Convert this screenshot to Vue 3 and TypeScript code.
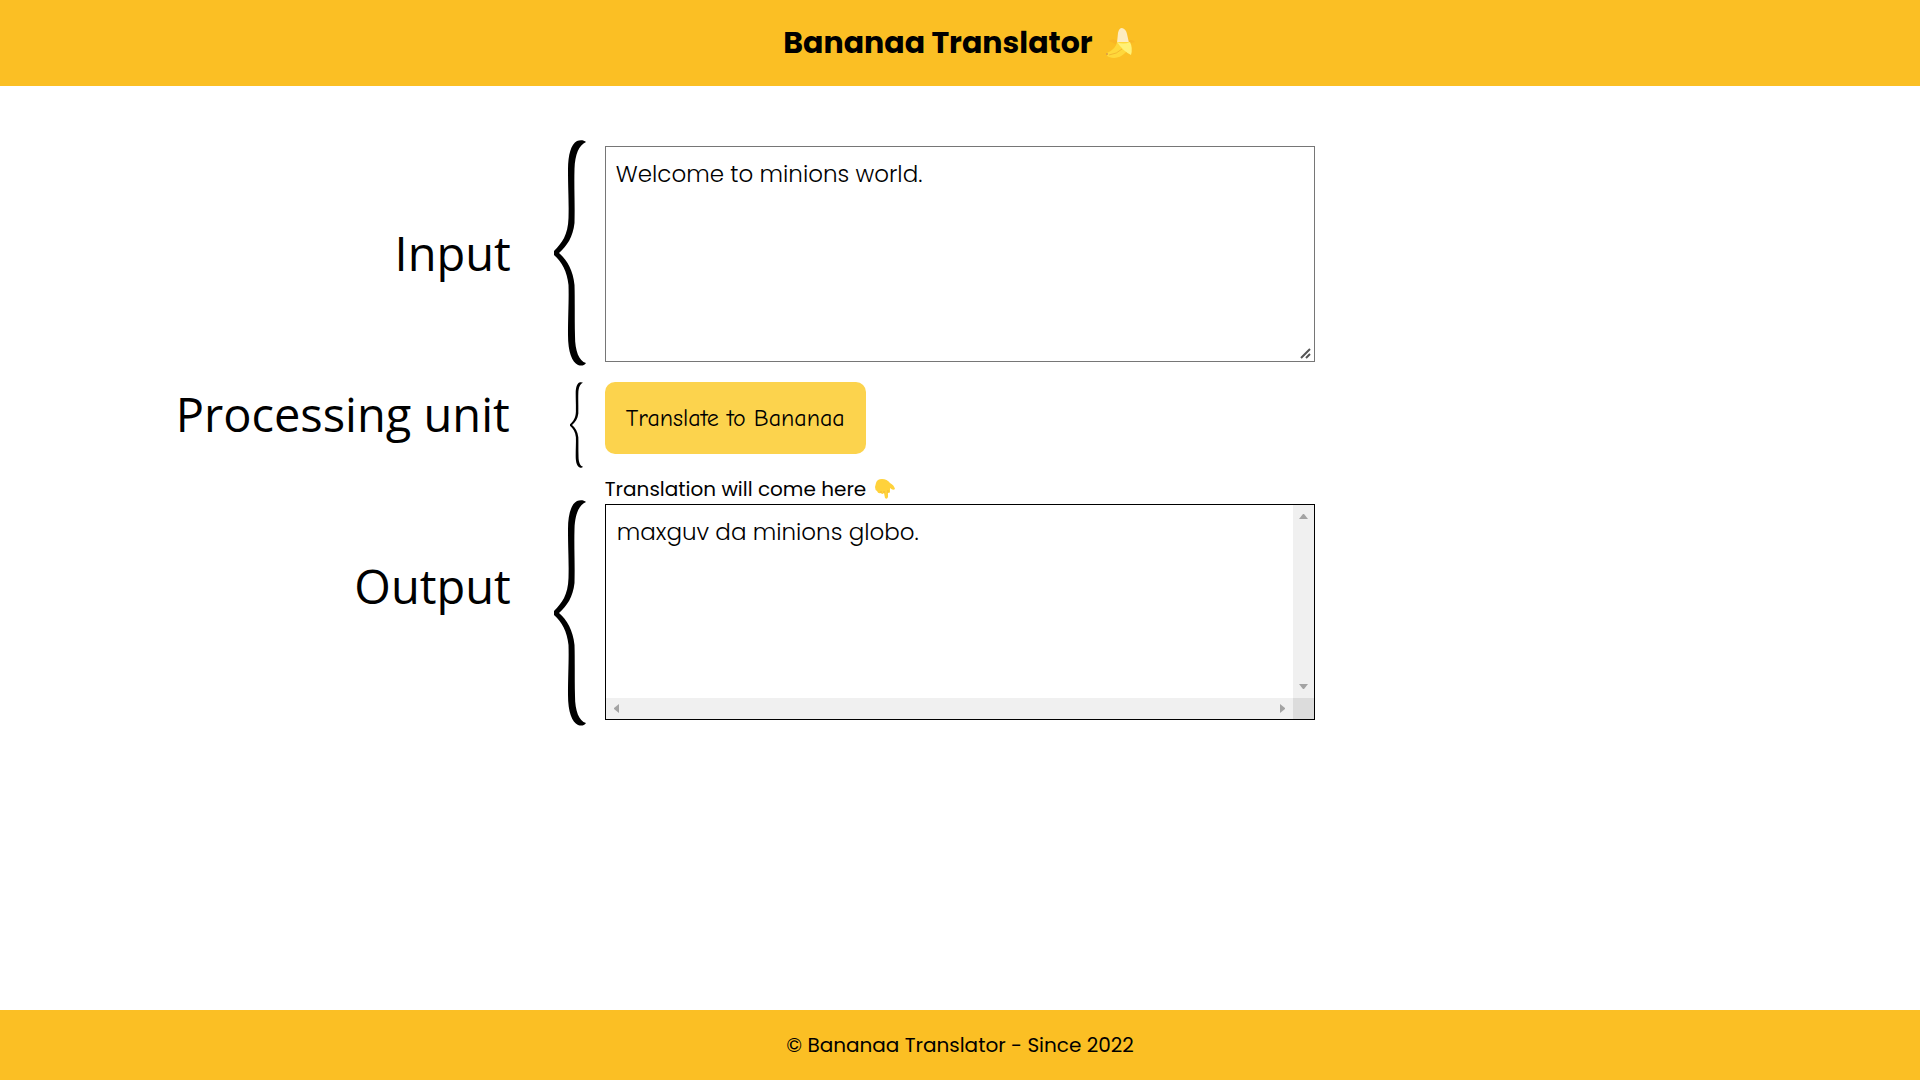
<script setup lang="ts">
import { ref } from 'vue'

const source = ref('Welcome to minions world.')
const output = ref('maxguv da minions globo.')

const dictionary: Record<string, string> = {
  welcome: 'maxguv',
  to: 'da',
  world: 'globo',
}

function translate(): void {
  output.value = source.value.replace(/[a-z]+/gi, (word) => dictionary[word.toLowerCase()] ?? word)
}

const bracePath =
  'M32 2 C30 0 26 0 23 1 C17 4 14 15 14 29 C14 50 15 60 14.500 78 C14 95 8 103 0 111 L0 115 C8 122 13 131 14.500 145 C15 160 14 175 14 195 C14 212 18 222 24 225 C27 226 30 226 32 223 C25 221 21 211 21 196 C20.500 175 21 160 20.500 145 C19 130 13 120 5 113 C13 106 19 97 20.500 83 C21 60 20 50 20.500 29 C21 14 25 5 32 2 Z'
</script>

<template>
  <div class="page">
    <header class="bar header">
      <h1>Bananaa Translator</h1>
      <svg class="banana" viewBox="0 0 30 32" aria-hidden="true">
        <path d="M4 14 Q9 10 13 15 L12 18 Q7 15 4 14Z M22 15 Q26 11 30 15 Q27 15 24 18Z" fill="#f9b625" />
        <path d="M12 16 L13 6 Q14 1 17 1 Q21 2 22 7 L24 16 L20 21Z" fill="#fdecc0" />
        <path d="M12 15 Q11 22 2 26 Q1 29 4 30 Q13 33 20 26 L25 21 L24 15Z" fill="#ffd83b" />
        <path d="M12 15 Q18 18 25 15 Q28 21 26 28 Q18 24 12 15Z" fill="#fff176" />
        <path d="M4 28 Q12 27 17 22" fill="none" stroke="#f4b92f" stroke-width="1" />
        <circle cx="2" cy="27" r="1" fill="#d99a48" />
      </svg>
    </header>

    <main class="diagram">
      <div class="note">
        <label class="note-text" for="source">Input</label>
        <svg class="brace" viewBox="0 0 32 226" preserveAspectRatio="none" aria-hidden="true">
          <path :d="bracePath" />
        </svg>
      </div>
      <div class="field">
        <textarea id="source" v-model="source" class="box" spellcheck="false"></textarea>
        <svg class="grip" viewBox="0 0 12 12" aria-hidden="true">
          <path d="M1 10 L10 1 M6 10 L10 6" />
        </svg>
      </div>

      <div class="note note-process">
        <span class="note-text">Processing unit</span>
        <svg class="brace brace-small" viewBox="0 0 32 226" preserveAspectRatio="none" aria-hidden="true">
          <path :d="bracePath" />
        </svg>
      </div>
      <div class="action">
        <button type="button" @click="translate">Translate to Bananaa</button>
      </div>

      <div class="note note-output">
        <span class="note-text">Output</span>
        <svg class="brace" viewBox="0 0 32 226" preserveAspectRatio="none" aria-hidden="true">
          <path :d="bracePath" />
        </svg>
      </div>
      <div class="result">
        <label class="caption" for="output">
          <span>Translation will come here</span>
          <svg class="hand" viewBox="0 0 20 20" aria-hidden="true">
            <path
              d="M1 4 Q2 0 7 0 Q12 0 15 4 Q19 6 20 10 Q18 12 15 9 L15 13 Q14 15 13 13 L13 18 Q12 21 10 19 L9 14 Q7 16 6 14 Q3 15 2 12 Q0 11 0 8Z"
              fill="#ffd23b"
            />
            <path d="M6 14 L6 12 M9 14 L9 12 M13 14 L13 11" fill="none" stroke="#f3b832" />
          </svg>
        </label>
        <div class="scroll-frame">
          <textarea id="output" v-model="output" class="box box-output" readonly spellcheck="false"></textarea>
          <div class="track track-y" aria-hidden="true">
            <svg viewBox="0 0 9 5"><path d="M0 5 L4 0 L5 0 L9 5Z" /></svg>
            <svg viewBox="0 0 9 5"><path d="M0 0 L9 0 L5 5 L4 5Z" /></svg>
          </div>
          <div class="track track-x" aria-hidden="true">
            <svg viewBox="0 0 5 9"><path d="M5 0 L5 9 L0 5 L0 4Z" /></svg>
            <svg viewBox="0 0 5 9"><path d="M0 0 L5 4 L5 5 L0 9Z" /></svg>
          </div>
          <div class="corner" aria-hidden="true"></div>
        </div>
      </div>
    </main>

    <footer class="bar footer">© Bananaa Translator - Since 2022</footer>
  </div>
</template>

<style>
body {
  margin: 0;
  background: #fff;
}
</style>

<style scoped>
.page {
  display: flex;
  flex-direction: column;
  min-height: 100vh;
  color: #000;
  font-family: Poppins, Inter, sans-serif;
}

.bar {
  display: flex;
  align-items: center;
  justify-content: center;
  background: #fbbf24;
}

.header {
  height: 86px;
  gap: 10px;
}

h1 {
  margin: 0;
  font-size: 30px;
  line-height: 40px;
  font-weight: 700;
}

.banana {
  width: 34px;
  height: 32px;
}

.diagram {
  display: grid;
  grid-template-columns: 1fr 37% 1fr;
  row-gap: 16px;
  align-content: start;
  flex: 1;
  padding: 54px 0;
}

.note {
  grid-column: 1;
  display: flex;
  justify-content: flex-end;
  align-items: center;
  gap: 43px;
  padding-right: 19px;
}

.note-text {
  font-family: 'Open Sans', sans-serif;
  font-size: 47px;
  line-height: 64px;
  white-space: nowrap;
}

.brace {
  flex: none;
  width: 32px;
  height: 226px;
}

.field,
.action,
.result {
  grid-column: 2;
}

.field {
  position: relative;
  padding-top: 6px;
}

.box {
  display: block;
  box-sizing: border-box;
  width: 100%;
  height: 216px;
  margin: 0;
  padding: 9px 10px;
  border: 1px solid #767676;
  border-radius: 0;
  outline: none;
  resize: none;
  background: #fff;
  color: #000;
  font: 300 23px/36px Poppins, Inter, sans-serif;
}

.grip {
  position: absolute;
  right: 3px;
  bottom: 6px;
  width: 12px;
  height: 12px;
  fill: none;
  stroke: #555;
  stroke-width: 2;
}

.note-process {
  align-items: flex-start;
  gap: 60px;
  padding-right: 22px;
}

.brace-small {
  width: 13px;
  height: 86px;
}

button {
  height: 72px;
  padding: 0 21px;
  border: 0;
  border-radius: 10px;
  background: #fcd34d;
  color: #000;
  font: 400 24px/32px 'Comic Sans MS', 'Comic Neue', Inter, sans-serif;
  cursor: pointer;
}

.note-output {
  align-items: flex-end;
}

.note-output .note-text {
  margin-bottom: 108px;
}

.result {
  margin-top: -8px;
}

.note-output,
.result {
  grid-row: 3;
}

.caption {
  display: flex;
  align-items: center;
  gap: 9px;
  height: 26px;
  margin-bottom: 2px;
  font-size: 20px;
  line-height: 26px;
}

.hand {
  width: 20px;
  height: 20px;
}

.scroll-frame {
  display: grid;
  grid-template-columns: 1fr 21px;
  grid-template-rows: 1fr 21px;
  box-sizing: border-box;
  height: 216px;
  margin-bottom: 6px;
  border: 1px solid #000;
}

.box-output {
  height: 100%;
  padding-left: 11px;
  border: 0;
}

.track {
  display: flex;
  align-items: center;
  justify-content: space-between;
  background: #f0f0f0;
  fill: #a3a3a3;
}

.track-y {
  flex-direction: column;
  padding: 9px 0;
}

.track-y svg {
  width: 9px;
  height: 5px;
}

.track-x {
  padding: 0 8px;
}

.track-x svg {
  width: 5px;
  height: 9px;
}

.corner {
  background: #dcdcdc;
}

.footer {
  height: 70px;
  font-size: 20px;
  line-height: 30px;
}
</style>
